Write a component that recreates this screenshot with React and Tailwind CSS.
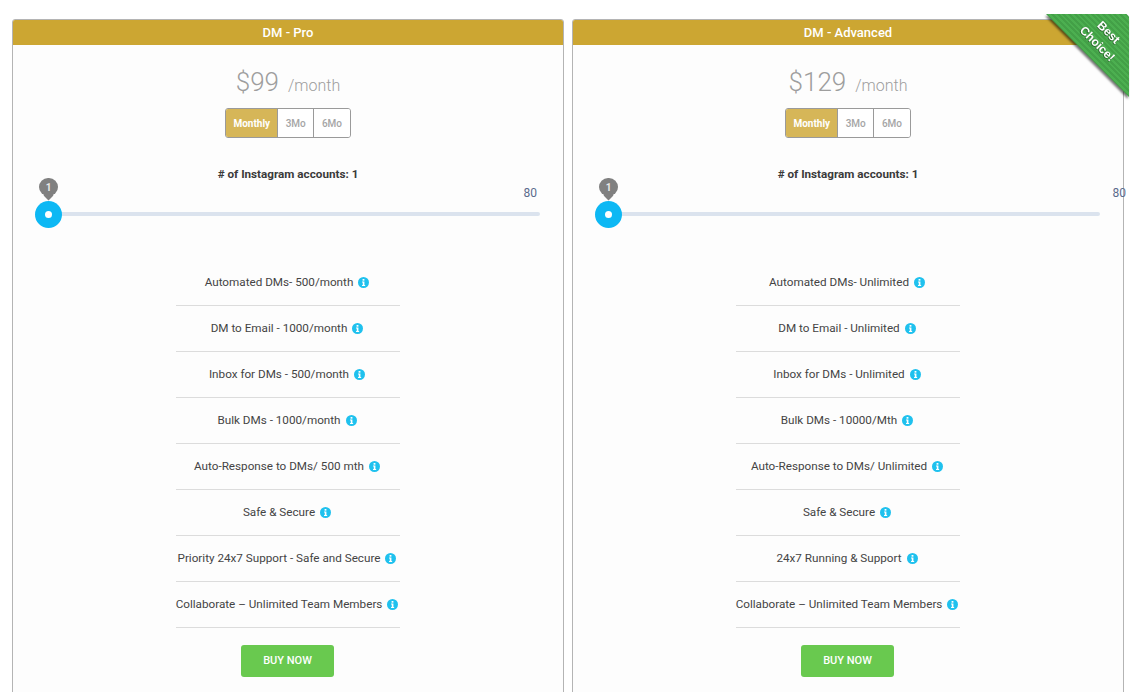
import React from 'react';

const plans = [
  {
    name: 'DM - Pro',
    price: '$99',
    maxPos: 'right-[4px]',
    features: [
      'Automated DMs- 500/month',
      'DM to Email - 1000/month',
      'Inbox for DMs - 500/month',
      'Bulk DMs - 1000/month',
      'Auto-Response to DMs/ 500 mth',
      'Safe & Secure',
      'Priority 24x7 Support - Safe and Secure',
      'Collaborate – Unlimited Team Members',
    ],
  },
  {
    name: 'DM - Advanced',
    price: '$129',
    maxPos: 'right-[-25px]',
    best: true,
    features: [
      'Automated DMs- Unlimited',
      'DM to Email - Unlimited',
      'Inbox for DMs - Unlimited',
      'Bulk DMs - 10000/Mth',
      'Auto-Response to DMs/ Unlimited',
      'Safe & Secure',
      '24x7 Running & Support',
      'Collaborate – Unlimited Team Members',
    ],
  },
];

const InfoIcon = () => (
  <svg viewBox="0 0 12 12" className="ml-[5px] h-[11px] w-[11px] shrink-0">
    <circle cx="6" cy="6" r="6" fill="#1fc1ee" />
    <rect x="5" y="2.2" width="2" height="1.8" fill="#fff" />
    <path d="M4.4 5h2.6v3.7h.8v1H4.4v-1h.8V6h-.8z" fill="#fff" />
  </svg>
);

const Ribbon = () => (
  <div className="absolute right-[-6px] top-[-6px] h-[83px] w-[83px] drop-shadow-[-1px_2px_1px_rgba(0,0,0,0.55)]">
    <div className="h-full w-full bg-[repeating-linear-gradient(45deg,#4caf50,#4caf50_2px,#43a047_2px,#43a047_4px)] [clip-path:polygon(0_0,97%_0,100%_3%,100%_100%)]">
      <div className="absolute left-[22px] top-[8px] w-[70px] rotate-45 text-center text-[12px] leading-[16px] font-bold text-white [font-family:'Liberation_Sans',sans-serif] [text-shadow:0_1px_1px_rgba(0,0,0,0.5)]">
        Best
        <br />
        Choice!
      </div>
    </div>
  </div>
);

const Slider = ({ maxPos }) => (
  <div className="relative mx-[22px] h-[42px]">
    <div className="absolute left-[13px] right-[1px] top-[30px] h-[4px] rounded-full bg-[#dbe3ee]" />
    <div className="absolute left-[4px] top-[-4px] flex h-[18px] w-[19px] items-center justify-center rounded-full bg-[#808080] text-[10px] font-bold text-[#e8e8e8]">
      <div className="absolute bottom-[-3px] left-[6px] h-[7px] w-[7px] rotate-45 bg-[#808080]" />
      <span className="relative">1</span>
    </div>
    <div className="absolute left-0 top-[19px] flex h-[27px] w-[27px] items-center justify-center rounded-full bg-[#0db8f4]">
      <div className="h-[7px] w-[7px] rounded-full bg-white" />
    </div>
    <div className={`absolute top-[4px] text-[12px] leading-[14px] text-[#5b6b8c] ${maxPos}`}>80</div>
  </div>
);

const PlanCard = ({ plan }) => (
  <div className="relative flex-1 rounded-t-[3px] border border-[#b4b4b4] bg-[#fdfdfd]">
    <div className="h-[25px] rounded-t-[2px] bg-[#cca632] text-center text-[13px] leading-[26px] font-medium text-white">
      {plan.name}
    </div>
    {plan.best && <Ribbon />}

    <div className="mt-[22px] flex items-baseline justify-center text-[#9e9e9e]">
      <span className="text-[26px] leading-[30px] font-light">{plan.price}</span>
      <span className="ml-[9px] text-[16px] leading-[30px] font-light">/month</span>
    </div>

    <div className="mt-[7px] flex justify-center">
      <div className="flex h-[30px] overflow-hidden rounded-[3px] border border-[#9a9a9a] text-[10px] font-medium text-[#a5a5a5]">
        <div className="flex w-[52px] items-center justify-center border-r border-[#9a9a9a] bg-[#d6b658] font-bold text-white">
          Monthly
        </div>
        <div className="flex w-[36px] items-center justify-center border-r border-[#9a9a9a] bg-white">3Mo</div>
        <div className="flex w-[35.5px] items-center justify-center bg-white">6Mo</div>
      </div>
    </div>

    <div className="mt-[28px] text-center text-[11.7px] leading-[16px] font-bold text-[#3a3a3a]">
      # of Instagram accounts: 1
    </div>

    <Slider maxPos={plan.maxPos} />

    <div className="mx-auto mt-[36px] w-[224px]">
      {plan.features.map((feature) => (
        <div
          key={feature}
          className="flex h-[46px] items-center justify-center border-b border-[#dcdcdc] pr-[2px] text-[11.7px] text-[#444444]"
        >
          <span className="whitespace-nowrap">{feature}</span>
          <InfoIcon />
        </div>
      ))}
    </div>

    <div className="mt-[17px] flex justify-center pb-[40px]">
      <div className="mr-[1px] flex h-[32px] w-[93px] items-center justify-center rounded-[3px] bg-[#69c94f] text-[11px] font-medium text-white">
        BUY NOW
      </div>
    </div>
  </div>
);

export default function App() {
  return (
    <div className="h-[692px] overflow-hidden bg-white font-['Roboto',sans-serif]">
      <div className="flex w-[1124px] gap-[8px] pl-[12px] pt-[19px]">
        {plans.map((plan) => (
          <PlanCard key={plan.name} plan={plan} />
        ))}
      </div>
    </div>
  );
}
